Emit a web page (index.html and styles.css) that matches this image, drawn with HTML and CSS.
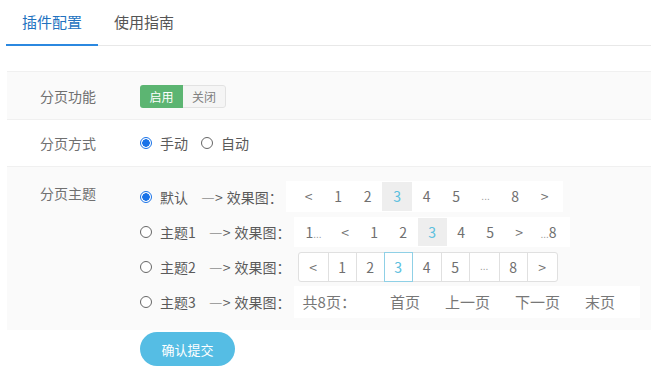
FILE: index.html
```html
<!DOCTYPE html>
<html lang="zh">
<head>
<meta charset="utf-8">
<link rel="stylesheet" href="styles.css">
</head>
<body>
<div class="tabs">
  <div class="tab active">插件配置</div>
  <div class="tab">使用指南</div>
</div>

<div class="form">
  <div class="row">
    <div class="label">分页功能</div>
    <div class="ctrl">
      <div class="toggle"><span class="on">启用</span><span class="off">关闭</span></div>
    </div>
  </div>
  <div class="row">
    <div class="label">分页方式</div>
    <div class="ctrl">
      <span class="radio checked"></span><span class="rtext">手动</span>
      <span class="radio"></span><span class="rtext">自动</span>
    </div>
  </div>
  <div class="row themes">
    <div class="label">分页主题</div>
    <div class="ctrl col">
      <div class="line">
        <span class="radio checked"></span><span class="rtext">默认</span>
        <span class="arrow"><span class="ar">—&gt;</span>效果图：</span>
        <div class="pg pg0">
          <span class="it">&lt;</span><span class="it">1</span><span class="it">2</span><span class="it cur">3</span><span class="it">4</span><span class="it">5</span><span class="it dots">...</span><span class="it">8</span><span class="it">&gt;</span>
        </div>
      </div>
      <div class="line">
        <span class="radio"></span><span class="rtext">主题1</span>
        <span class="arrow"><span class="ar">—&gt;</span>效果图：</span>
        <div class="pg pg1">
          <span class="it first">1<small>...</small></span><span class="it">&lt;</span><span class="it">1</span><span class="it">2</span><span class="it cur">3</span><span class="it">4</span><span class="it">5</span><span class="it">&gt;</span><span class="it last"><small>...</small>8</span>
        </div>
      </div>
      <div class="line">
        <span class="radio"></span><span class="rtext">主题2</span>
        <span class="arrow"><span class="ar">—&gt;</span>效果图：</span>
        <div class="pg pg2">
          <span class="it w30">&lt;</span><span class="it">1</span><span class="it">2</span><span class="it cur">3</span><span class="it">4</span><span class="it">5</span><span class="it dots w30">...</span><span class="it">8</span><span class="it w30">&gt;</span>
        </div>
      </div>
      <div class="line">
        <span class="radio"></span><span class="rtext">主题3</span>
        <span class="arrow"><span class="ar">—&gt;</span>效果图：</span>
        <div class="pg pg3">
          <span class="total">共8页：</span><span class="lk">首页</span><span class="lk">上一页</span><span class="lk">下一页</span><span class="lk">末页</span>
        </div>
      </div>
    </div>
  </div>
</div>

<div class="actions">
  <button class="submit">确认提交</button>
</div>
</body>
</html>
```

FILE: styles.css
```css
* { box-sizing: border-box; }
body {
  margin: 0;
  font-family: "Noto Sans CJK SC", "Noto Sans", sans-serif;
  color: #555;
  background: #fff;
  font-size: 14px;
}
.tabs {
  display: flex;
  margin-left: 6px;
  height: 46px;
  border-bottom: 1px solid #e8e8e8;
}
.tab {
  padding: 0 16px;
  font-size: 15px;
  line-height: 44px;
  color: #555;
}
.tab.active {
  color: #2272bf;
  border-bottom: 2px solid #2b88e0;
  margin-bottom: -1px;
}
.form {
  margin: 25px 0 0 7px;
}
.row {
  display: flex;
  border-top: 1px solid #f0f0f0;
  height: 48px;
  align-items: center;
}
.row:nth-child(1) { background: #fafafa; }
.row:nth-child(2) { height: 47px; }
.row.themes {
  background: #fafafa;
  height: 164px;
  align-items: flex-start;
  padding-top: 12px;
}
.label {
  width: 133px;
  padding-left: 33px;
  color: #707070;
  font-size: 14px;
  line-height: 20px;
}
.themes .label { margin-top: 4px; }
.ctrl {
  display: flex;
  align-items: center;
}
.ctrl.col {
  flex-direction: column;
  align-items: flex-start;
}
.toggle {
  display: flex;
  font-size: 12px;
  line-height: 23px;
  border-radius: 3px;
  overflow: hidden;
  margin-top: 1px;
}
.toggle .on {
  background: #5cb572;
  color: #fff;
  width: 43px;
  text-align: center;
}
.toggle .off {
  background: #f5f5f5;
  color: #808080;
  width: 43px;
  text-align: center;
  border: 1px solid #e2e2e2;
  border-left: none;
  border-radius: 0 3px 3px 0;
  line-height: 21px;
}
.radio {
  width: 12px;
  height: 12px;
  border-radius: 50%;
  border: 1px solid #666;
  background: #fff;
  display: inline-block;
  flex: none;
}
.radio.checked {
  border: 1px solid #1a73e8;
  background: radial-gradient(circle, #1a73e8 0 3.5px, #fff 4px);
}
.rtext {
  margin-left: 8px;
  margin-right: 13px;
  color: #5a5a5a;
  line-height: 20px;
}
.line {
  display: flex;
  align-items: center;
  height: 35px;
}
.arrow {
  color: #5a5a5a;
  white-space: nowrap;
  margin-right: 3px;
}
.arrow .ar { margin-right: 4px; }
.pg {
  display: flex;
  align-items: center;
  background: #fff;
  color: #707070;
  font-size: 14px;
}
.pg0 { padding: 1px 4px 1px 8px; }
.pg0 .it, .pg1 .it {
  width: 29.5px;
  height: 29px;
  line-height: 29px;
  text-align: center;
}
.pg1 { padding: 1px 6px 1px 3px; margin-left: 0; }
.pg1 .it { width: 29px; height: 28px; line-height: 28px; }
.pg1 .first { width: 34px; }
.pg1 .last { width: 30px; }
.pg small, .it.dots {
  font-family: "Liberation Sans", sans-serif;
  font-size: 10px;
  color: #999;
}
.it.cur { background: #eee; color: #5bc0de; }
.pg2 {
  margin-left: 4px;
  border: 1px solid #e0e0e0;
  border-radius: 3px;
  height: 30px;
}
.pg2 .it {
  width: 28px;
  height: 28px;
  line-height: 28px;
  border-left: 1px solid #e0e0e0;
  text-align: center;
}
.pg2 .it.w30 { width: 30px; }
.pg2 .it:first-child { border-left: none; width: 29px; }
.pg2 .it.cur {
  width: 29px;
  background: #fff;
  border: 1px solid #8fd0e6;
  height: 30px;
  line-height: 28px;
  margin: -1px 0;
}
.pg2 .it.cur + .it { border-left: none; }
.pg3 {
  margin-left: 0;
  height: 32px;
  padding: 0 13px 0 9px;
  font-size: 15px;
  color: #777;
}
.pg3 .total { margin-right: 22px; }
.pg3 .lk { padding: 0 12px; }
.pg3 .lk + .lk { padding-left: 13px; }
.actions {
  padding: 2px 0 0 140px;
}
.submit {
  border: none;
  background: #55bde4;
  color: #fff;
  font-family: "Noto Sans CJK SC", sans-serif;
  font-size: 13px;
  width: 95px;
  height: 34px;
  border-radius: 17px;
  padding: 0;
}
```
